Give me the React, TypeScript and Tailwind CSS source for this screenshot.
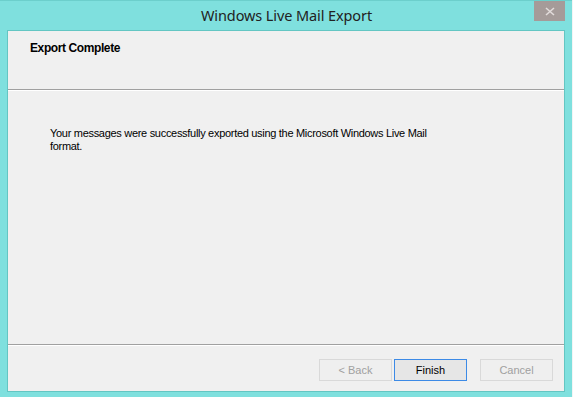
export default function App() {
  return (
    <div className="w-[573px] h-[397px] bg-[#e8e8e8] flex" style={{ fontFamily: '"Liberation Sans", Arial, sans-serif' }}>
      <div className="relative w-[572px] h-[397px] bg-[#7fe0de] border-t border-[#6ccfcc] flex flex-col px-[7px] pb-[5px]">
        <div className="h-[29px] flex items-center justify-center">
          <span className="text-[14.5px] text-[#222] pl-[1px] tracking-[-0.1px]" style={{ fontFamily: '"Noto Sans", "Open Sans", sans-serif' }}>
            Windows Live Mail Export
          </span>
        </div>
        <button className="absolute right-[7px] top-0 w-[31px] h-[20px] bg-[#a59b99] flex items-center justify-center">
          <svg width="10" height="9" viewBox="0 0 10 9">
            <path d="M1 1 L9 8 M9 1 L1 8" stroke="#e2dcdb" strokeWidth="1.6" />
          </svg>
        </button>
        <div className="flex-1 flex flex-col bg-[#f0f0f0] border border-[#63c6c3]">
          <div className="h-[58px] pl-[22px] pt-[4px]">
            <span className="text-[12px] font-bold text-black tracking-[-0.4px]">Export Complete</span>
          </div>
          <div className="h-px bg-[#a0a0a0]" />
          <div className="h-px bg-white" />
          <div className="flex-1 pl-[42px] pt-[36px]">
            <p className="text-[11px] leading-[13px] text-black w-[400px] tracking-[-0.3px]">
              Your messages were successfully exported using the Microsoft Windows Live Mail format.
            </p>
          </div>
          <div className="h-px bg-[#a0a0a0]" />
          <div className="h-px bg-white" />
          <div className="h-[45px] flex items-start justify-end gap-[13px] pr-[11px] pt-[13px]">
            <div className="flex gap-[2px]">
              <button disabled className="w-[73px] h-[22px] border border-[#d9d9d9] bg-[#efefef] text-[11px] text-[#a0a0a0]">
                &lt; Back
              </button>
              <button className="w-[73px] h-[22px] border border-[#3c8ae6] bg-[#e6e6e6] text-[11px] text-black">
                Finish
              </button>
            </div>
            <button disabled className="w-[73px] h-[22px] border border-[#d9d9d9] bg-[#efefef] text-[11px] text-[#a0a0a0]">
              Cancel
            </button>
          </div>
        </div>
      </div>
      <div className="w-px bg-[#f4f4f4]" />
    </div>
  );
}
